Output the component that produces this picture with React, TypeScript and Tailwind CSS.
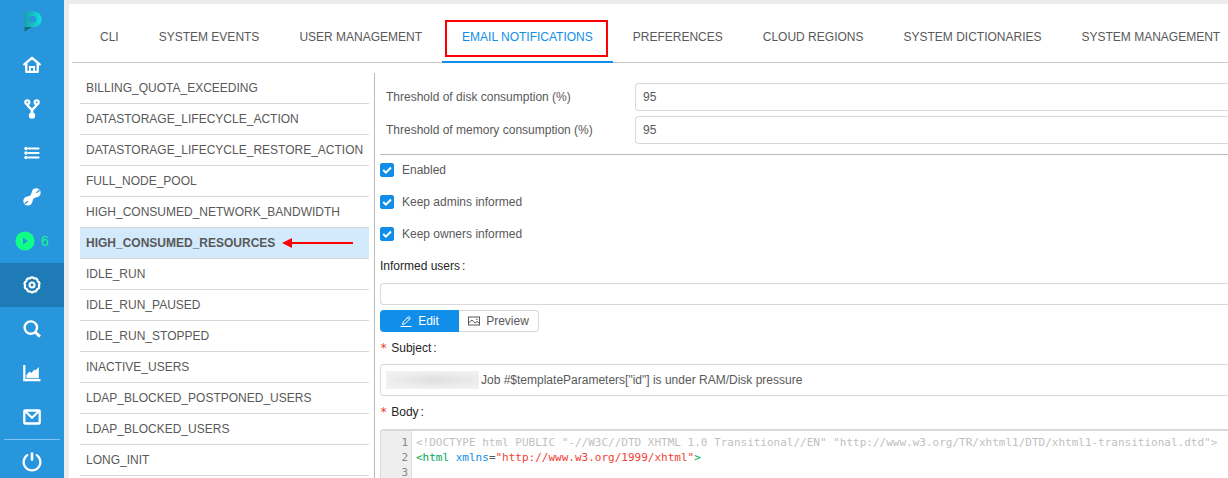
import React from "react";

const iconProps = {
  width: 18,
  height: 18,
  viewBox: "0 0 18 18",
  fill: "none",
  stroke: "currentColor",
  "aria-hidden": true,
} as const;

function Logo() {
  return (
    <svg width="18" height="21" viewBox="0 0 18 21" aria-hidden="true">
      <defs>
        <linearGradient id="logo-fill" x1="0" y1="0" x2="1" y2="0">
          <stop offset="0" stopColor="#15a0ac" />
          <stop offset="0.5" stopColor="#19bfc6" />
          <stop offset="1" stopColor="#0be4e0" />
        </linearGradient>
      </defs>
      <path
        fill="url(#logo-fill)"
        fillRule="evenodd"
        d="M.5 .5H9.500C14 .5 17.500 3.600 17.500 8.200S14 16 9.500 16H.5ZM5.500 5V11.500H9C11 11.500 12.500 10.200 12.500 8.200S11 5 9 5Z"
      />
      <path fill="#12707f" d="M.5 16H8L.5 20.800Z" />
    </svg>
  );
}

function HomeIcon() {
  return (
    <svg {...iconProps}>
      <path strokeWidth="2.300" strokeLinecap="round" strokeLinejoin="round" d="M1.300 8.400L9 1.800L16.700 8.400M3.300 8V15.900H14.700V8" />
      <path strokeWidth="1.800" d="M6.900 15.500V11H11.100V15.500" />
    </svg>
  );
}

function ForkIcon() {
  return (
    <svg {...iconProps} height={20} viewBox="0 0 18 20">
      <circle cx="4.300" cy="3.300" r="2" strokeWidth="2.200" />
      <circle cx="13.700" cy="3.300" r="2" strokeWidth="2.200" />
      <circle cx="9" cy="16.600" r="2.200" strokeWidth="2" fill="currentColor" />
      <path strokeWidth="2.600" d="M4.300 5C4.300 8.600 9 8.800 9 12.200V15M13.700 5C13.700 8.600 9 8.800 9 12.200" />
    </svg>
  );
}

function BarsIcon() {
  return (
    <svg {...iconProps}>
      <path strokeWidth="2.200" strokeLinecap="round" d="M5.500 4.500H15.500M5.500 9H15.500M5.500 13.500H15.500" />
      <g fill="currentColor" stroke="none">
        <circle cx="3" cy="4.500" r="1.700" />
        <circle cx="3" cy="9" r="1.700" />
        <circle cx="3" cy="13.500" r="1.700" />
      </g>
    </svg>
  );
}

function ToolIcon() {
  return (
    <svg {...iconProps} fill="currentColor" stroke="none">
      <path d="M8.700 4.500L13.500 9.300C11.500 9.500 9.800 11 9.300 13.500L4.500 8.700C7 8.200 8.500 6.500 8.700 4.500Z" />
      <circle cx="13.200" cy="4.800" r="4.500" />
      <circle cx="4.900" cy="13" r="4.600" />
      <path stroke="#2796dd" strokeWidth="1.200" d="M13.300 4.800L16.700 2.200M1.700 15.800L5 13.200" />
    </svg>
  );
}

function PlayIcon() {
  return (
    <svg width="20" height="20" viewBox="0 0 20 20" aria-hidden="true">
      <circle cx="10" cy="10" r="9.600" fill="#0fff87" />
      <path fill="#2796dd" d="M8 6.500L13 10L8 13.500Z" />
    </svg>
  );
}

function SettingIcon() {
  return (
    <svg {...iconProps}>
      <path
        strokeWidth="2.200"
        strokeLinejoin="round"
        d="M6.700 2.500Q9 .3 11.300 2.500Q14.500 2 14.600 5.200Q17.500 6.600 15.900 9.300Q17 12.200 14 13.300Q13.300 16.300 10.300 15.600Q9 17.200 7.700 15.600Q4.700 16.300 4 13.300Q1 12.200 2.100 9.300Q.5 6.600 3.400 5.200Q3.500 2 6.700 2.500Z"
      />
      <circle cx="9" cy="9" r="2.500" strokeWidth="2.200" />
    </svg>
  );
}

function SearchIcon() {
  return (
    <svg {...iconProps}>
      <circle cx="7.800" cy="7.600" r="6.200" strokeWidth="2.400" />
      <path strokeWidth="2.800" d="M12 12L17 16.600" />
    </svg>
  );
}

function ChartIcon() {
  return (
    <svg {...iconProps}>
      <path strokeWidth="2.200" d="M1.300 1V16.200H17.500" />
      <path fill="currentColor" stroke="none" d="M3.400 14.200V11L6.500 7.500L8.500 9L11.500 5.500L12.500 6.500L15.800 3V14.200Z" />
    </svg>
  );
}

function MailIcon() {
  return (
    <svg {...iconProps}>
      <rect x="1.300" y="2.500" width="15.400" height="13" rx="0.800" strokeWidth="2.300" />
      <path strokeWidth="2.200" d="M2.500 3.500L9 9.800L15.500 3.500" />
    </svg>
  );
}

function PowerIcon() {
  return (
    <svg {...iconProps} width={20} height={20} viewBox="0 0 20 20">
      <path strokeWidth="2.200" strokeLinecap="round" d="M5.300 3.100A8.400 8.400 0 1 0 14.700 3.100" />
      <path strokeWidth="2.600" strokeLinecap="round" d="M10 1.600V7.500" />
    </svg>
  );
}

const navItems = [
  { name: "Home", icon: <HomeIcon /> },
  { name: "Pipelines", icon: <ForkIcon /> },
  { name: "Library", icon: <BarsIcon /> },
  { name: "Tools", icon: <ToolIcon /> },
  { name: "Runs", icon: <PlayIcon />, count: 6 },
  { name: "Settings", icon: <SettingIcon />, active: true },
  { name: "Search", icon: <SearchIcon /> },
  { name: "Billing", icon: <ChartIcon /> },
  { name: "Messages", icon: <MailIcon /> },
];

const tabs = [
  "CLI",
  "SYSTEM EVENTS",
  "USER MANAGEMENT",
  "EMAIL NOTIFICATIONS",
  "PREFERENCES",
  "CLOUD REGIONS",
  "SYSTEM DICTIONARIES",
  "SYSTEM MANAGEMENT",
];

const templates = [
  "BILLING_QUOTA_EXCEEDING",
  "DATASTORAGE_LIFECYCLE_ACTION",
  "DATASTORAGE_LIFECYCLE_RESTORE_ACTION",
  "FULL_NODE_POOL",
  "HIGH_CONSUMED_NETWORK_BANDWIDTH",
  "HIGH_CONSUMED_RESOURCES",
  "IDLE_RUN",
  "IDLE_RUN_PAUSED",
  "IDLE_RUN_STOPPED",
  "INACTIVE_USERS",
  "LDAP_BLOCKED_POSTPONED_USERS",
  "LDAP_BLOCKED_USERS",
  "LONG_INIT",
];

function Sidebar() {
  return (
    <nav className="flex w-16 shrink-0 flex-col bg-[#2796dd] text-white">
      <a href="#" aria-label="Dashboard" className="flex h-[43px] shrink-0 items-center justify-center pl-[2px]">
        <Logo />
      </a>
      {navItems.map((item) => (
        <a
          key={item.name}
          href="#"
          aria-label={item.name}
          className={`flex h-11 shrink-0 items-center justify-center gap-1.5 ${item.active ? "bg-[#1e7bb5]" : ""}`}
        >
          {item.icon}
          {item.count && <span className="text-sm text-[#0fff87]">{item.count}</span>}
        </a>
      ))}
      <hr className="mx-1 shrink-0 border-[#7fc4f2]" />
      <button type="button" aria-label="Log out" className="flex h-11 shrink-0 items-center justify-center">
        <PowerIcon />
      </button>
    </nav>
  );
}

function Tabs() {
  return (
    <div role="tablist" className="ml-[3px] flex shrink-0 border-b border-[#ccc] pt-2 pl-2">
      {tabs.map((tab) => {
        const active = tab === "EMAIL NOTIFICATIONS";
        return (
          <button
            key={tab}
            type="button"
            role="tab"
            aria-selected={active}
            className={`relative -mb-px h-[51px] shrink-0 border-b-2 px-5 pt-px whitespace-nowrap ${
              active ? "border-[#108ee9] text-[#108ee9]" : "border-transparent"
            }`}
          >
            {tab}
            {active && <span className="absolute top-2 right-[5px] bottom-1 left-[3px] border-2 border-[#fe0000]" />}
          </button>
        );
      })}
    </div>
  );
}

function TemplateList() {
  return (
    <ul className="w-[289px] shrink-0">
      {templates.map((name) => {
        const active = name === "HIGH_CONSUMED_RESOURCES";
        return (
          <li key={name} className="border-b border-[#d9d9d9]">
            <button
              type="button"
              className={`flex h-[30px] w-full items-center gap-[7px] px-1.5 ${active ? "bg-[#d2eafb] font-bold" : ""}`}
            >
              {name}
              {active && (
                <svg width="72" height="12" viewBox="0 0 72 12" fill="#fe0000" aria-hidden="true">
                  <path d="M0 6L10 1V5H71V7H10V11Z" />
                </svg>
              )}
            </button>
          </li>
        );
      })}
    </ul>
  );
}

function Threshold({ id, label }: { id: string; label: string }) {
  return (
    <div className="flex items-center">
      <label htmlFor={id} className="w-[255px] shrink-0 pl-1.5">
        {label}
      </label>
      <input
        id={id}
        defaultValue="95"
        className="h-7 min-w-0 flex-1 rounded-l border border-r-0 border-[#d9d9d9] px-[7px] outline-none"
      />
    </div>
  );
}

function Check({ label }: { label: string }) {
  return (
    <label className="flex h-8 items-center gap-2">
      <span className="grid">
        <input
          type="checkbox"
          defaultChecked
          className="peer size-3.5 appearance-none rounded-[2px] border border-[#d9d9d9] [grid-area:1/1] checked:border-[#108ee9] checked:bg-[#108ee9]"
        />
        <svg
          viewBox="0 0 14 14"
          fill="none"
          stroke="white"
          strokeWidth="2"
          aria-hidden="true"
          className="pointer-events-none invisible size-3.5 [grid-area:1/1] peer-checked:visible"
        >
          <path d="M3.200 7L5.900 9.600L11 4.500" />
        </svg>
      </span>
      {label}
    </label>
  );
}

function FieldLabel({ id, htmlFor, required, children }: { id?: string; htmlFor?: string; required?: boolean; children: string }) {
  return (
    <label id={id} htmlFor={htmlFor} className="flex h-8 shrink-0 items-center text-[#262626]">
      {required && <span className="mr-1 font-['DejaVu_Sans_Mono',monospace] leading-none text-[#f04134]">*</span>}
      {children}
      <span className="ml-[2px]">:</span>
    </label>
  );
}

function CodeEditor() {
  return (
    <div className="mt-px flex min-h-80 shrink-0 rounded-tl border-t-2 border-l border-[#d9d9d9] font-['DejaVu_Sans_Mono',monospace] text-[11px] leading-[15px]">
      <div className="w-[31px] shrink-0 rounded-tl border-r border-[#ddd] bg-[#eee] pt-1 pr-[3px] text-right text-[#888]">
        <div>1</div>
        <div>2</div>
        <div>3</div>
      </div>
      <div role="textbox" aria-multiline="true" aria-labelledby="body-label" tabIndex={0} className="pt-1 pl-1 whitespace-pre outline-none">
        <div className="text-[#bfbfbf]">
          {'<!DOCTYPE html PUBLIC "-//W3C//DTD XHTML 1.0 Transitional//EN" "http://www.w3.org/TR/xhtml1/DTD/xhtml1-transitional.dtd">'}
        </div>
        <div>
          <span className="text-[#00a854]">{"<html"}</span> <span className="text-[#108ee9]">xmlns</span>=
          <span className="text-[#f04134]">{'"http://www.w3.org/1999/xhtml"'}</span>
          <span className="text-[#00a854]">{">"}</span>
        </div>
      </div>
    </div>
  );
}

function TemplateForm() {
  return (
    <form className="ml-[5px] flex min-w-0 flex-1 flex-col overflow-hidden border-l border-[#bbb] pl-[5px]">
      <div className="mt-2.5 mb-2.5 flex shrink-0 flex-col gap-[5px]">
        <Threshold id="disk" label="Threshold of disk consumption (%)" />
        <Threshold id="memory" label="Threshold of memory consumption (%)" />
      </div>
      <hr className="shrink-0 border-[#bbb]" />
      <div className="-mt-px shrink-0">
        <Check label="Enabled" />
        <Check label="Keep admins informed" />
        <Check label="Keep owners informed" />
      </div>
      <FieldLabel htmlFor="users">Informed users</FieldLabel>
      <input id="users" className="mt-px h-[22px] shrink-0 rounded-l border border-r-0 border-[#d9d9d9] px-1.5 outline-none" />
      <div className="mt-[5px] flex h-[22px] shrink-0">
        <button type="button" className="flex w-[79px] items-center justify-center gap-1.5 rounded-l bg-[#108ee9] pb-px text-white">
          <svg width="12" height="12" viewBox="0 0 12 12" fill="none" stroke="currentColor" aria-hidden="true">
            <path d="M.5 11.500H11.500M2.500 9.500L3.200 7L8.700 1.500L10.500 3.200L5 8.700L2.500 9.500ZM7.500 2.800L9.200 4.500" />
          </svg>
          Edit
        </button>
        <button
          type="button"
          className="flex w-20 items-center justify-center gap-1.5 rounded-r border border-l-0 border-[#d9d9d9] pb-px"
        >
          <svg width="12" height="12" viewBox="0 0 12 12" fill="none" stroke="currentColor" aria-hidden="true">
            <rect x="0.500" y="2" width="11" height="8" />
            <path d="M1 7.500L4 5L7 8L9 6.500L11 8M8 4.300H9.500" />
          </svg>
          Preview
        </button>
      </div>
      <FieldLabel htmlFor="subject" required>
        Subject
      </FieldLabel>
      <div className="flex h-8 shrink-0 items-center rounded-l border border-r-0 border-[#d9d9d9] px-[5px]">
        <span className="flex h-[18px] w-[93px] items-center overflow-hidden bg-[#f3f3f3]">
          <span className="h-2.5 w-full bg-linear-to-r from-[#eee] via-[#dedede] to-[#eaeaea] blur-[3px]" />
        </span>
        <input
          id="subject"
          defaultValue={'Job #$templateParameters["id"] is under RAM/Disk pressure'}
          className="min-w-0 flex-1 pl-[2px] outline-none"
        />
      </div>
      <FieldLabel id="body-label" required>
        Body
      </FieldLabel>
      <CodeEditor />
    </form>
  );
}

export default function App() {
  return (
    <div className="flex h-screen overflow-hidden bg-[#ececec] font-['Liberation_Sans',Arial,sans-serif] text-xs text-[#595959]">
      <Sidebar />
      <main className="mt-1 ml-[5px] flex min-w-0 flex-1 flex-col overflow-hidden bg-white">
        <Tabs />
        <div className="flex min-h-0 flex-1 pt-2.5 pl-[11px]">
          <TemplateList />
          <TemplateForm />
        </div>
      </main>
    </div>
  );
}
